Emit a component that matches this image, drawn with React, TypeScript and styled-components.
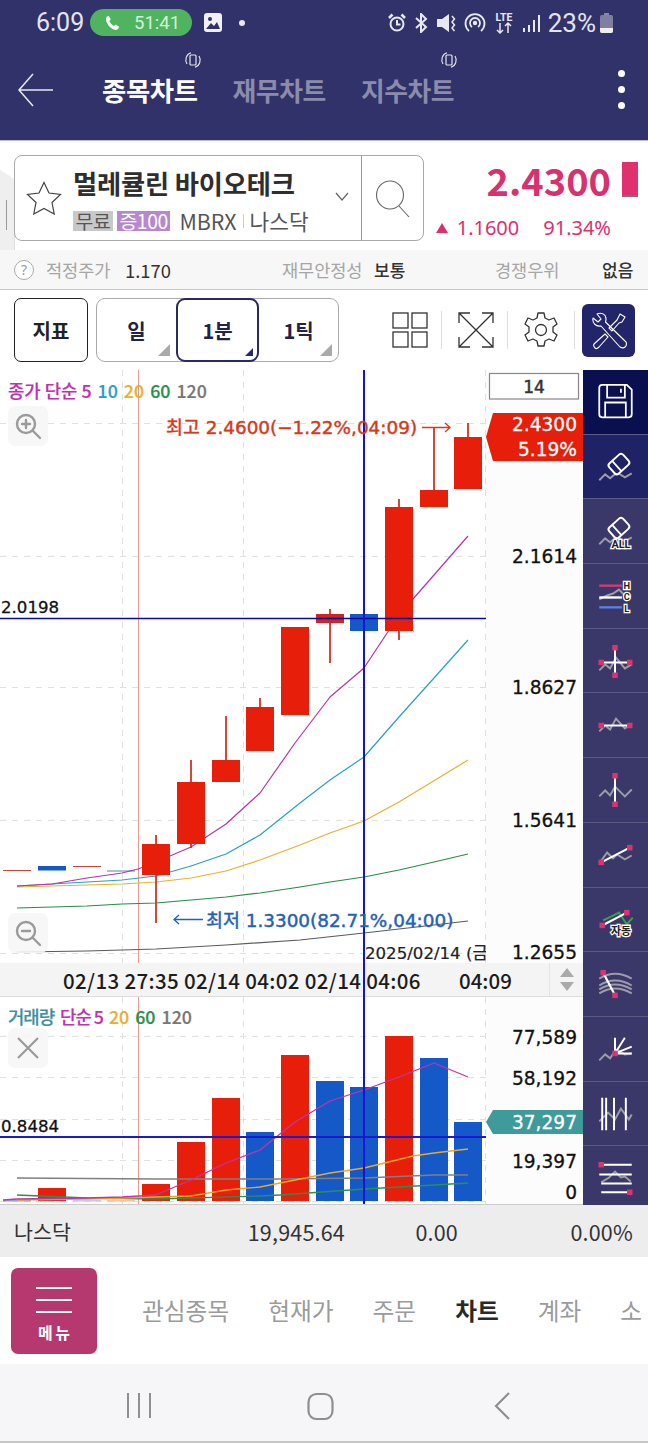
import React from "react";
import styled, { createGlobalStyle } from "styled-components";

const KR = `"Noto Sans CJK KR", "Noto Sans", sans-serif`;
const CHART = `"DejaVu Sans", "Noto Sans CJK KR", sans-serif`;

const Global = createGlobalStyle`
  html, body { margin: 0; padding: 0; background: #fff; }
  * { box-sizing: border-box; }
  body { font-family: ${KR}; }
`;

const Page = styled.div`
  width: 648px; height: 1445px; overflow: hidden; position: relative; background: #fff;
  display: flex; flex-direction: column;
`;

/* ---------- top ---------- */
const TopArea = styled.header`
  height: 140px; background: #32326a; display: flex; flex-direction: column; flex: none;
`;
const StatusBar = styled.div`
  height: 45px; display: flex; align-items: center; padding: 0 35px 0 36px; color: #e4e4ee;
  font-family: Roboto, sans-serif;
`;
const Clock = styled.span`font-size: 25px; width: 54px;`;
const CallPill = styled.div`
  width: 102px; height: 27px; border-radius: 14px; background: #4fb35f; display: flex; align-items: center;
  padding-left: 14px; gap: 13px; color: #d6f0d8; font-size: 18.5px;
`;
const StatusLeft = styled.div`display: flex; align-items: center; gap: 12px; margin-left: 12px;`;
const StatusDot = styled.i`width: 6px; height: 6px; border-radius: 50%; background: #e8e8f0; margin-left: 5px;`;
const StatusRight = styled.div`display: flex; align-items: center; margin-left: auto; gap: 8px;`;
const BatteryText = styled.span`font-size: 26px;`;

const TitleBar = styled.nav`
  flex: 1; display: flex; align-items: flex-start; padding-left: 18px; position: relative;
`;
const BackIcon = styled.svg`width: 36px; height: 34px; margin-top: 28px; flex: none;`;
const Tabs = styled.div`display: flex; margin-left: 48px; gap: 35px; margin-top: 25px;`;
const Tab = styled.div<{ $on?: boolean }>`
  position: relative; font-size: ${(p) => (p.$on ? 26.4 : 25.8)}px; font-weight: 700; line-height: 40px; letter-spacing: -.4px;
  color: ${(p) => (p.$on ? "#ffffff" : "#8b8bab")};
`;
const RotateMark = styled.svg`position: absolute; right: -4px; top: -19px; width: 18px; height: 18px;`;
const MoreDots = styled.div`
  position: absolute; right: 23px; top: 25px; display: flex; flex-direction: column; gap: 9px;
  i { width: 7px; height: 7px; border-radius: 50%; background: #fff; display: block; }
`;

/* ---------- stock ---------- */
const StockArea = styled.section`
  height: 110px; display: flex; padding: 14px 0 0 14px; position: relative; flex: none; border-top: 1px solid #b8bcd4;
`;
const SideHandle = styled.div`
  position: absolute; left: -1px; top: 28px; width: 16px; height: 87px; background: #efefef;
  border: 1px solid #ddd; border-radius: 0 6px 6px 0;
  clip-path: polygon(0 0, 100% 12%, 100% 95%, 0 100%);
  &::after { content: ""; position: absolute; left: 6px; top: 30px; width: 1px; height: 30px; background: #999; }
`;
const StockBox = styled.div`
  width: 410px; height: 86px; border: 1px solid #a8a8a8; border-radius: 8px; display: flex; background: #fff;
  position: relative;
`;
const StarCell = styled.div`width: 58px; display: flex; align-items: center; justify-content: center; flex: none;`;
const StockBody = styled.div`flex: 1; display: flex; flex-direction: column; position: relative;`;
const StockName = styled.div`font-size: 26.3px; font-weight: 700; color: #2e2e2e; line-height: 30px; margin-top: 12px; letter-spacing: -.2px;`;
const StockMeta = styled.div`display: flex; align-items: center; margin-top: 13px; font-size: 21.4px; color: #555; line-height: 20px;`;
const Chip = styled.span<{ $bg: string; $fg: string }>`
  background: ${(p) => p.$bg}; color: ${(p) => p.$fg}; height: 20px; padding: 0 2.5px; margin-right: 4px;
  font-size: 19.4px; line-height: 20px; letter-spacing: -.4px;
`;
const MbrxText = styled.span`margin-left: 5px;`;
const MetaSep = styled.i`width: 1px; height: 14px; background: #ccc; margin: 0 6px;`;
const Chevron = styled.svg`position: absolute; right: 11px; top: 35px; width: 16px; height: 12px;`;
const SearchCell = styled.div`
  width: 62px; border-left: 1px solid #999; display: flex; align-items: center; justify-content: center; flex: none; padding-top: 1px;
`;
const PriceCol = styled.div`flex: 1; display: flex; flex-direction: column; align-items: flex-end; padding-right: 37px; position: relative; color: #d9316f;`;
const Price = styled.div`font-size: 38px; font-weight: 700; line-height: 56px; margin-top: -3px;`;
const PriceBar = styled.i`position: absolute; right: 10px; top: 7px; width: 16px; height: 35px; background: #e0306f; border-bottom: 2px solid #8a6a7a;`;
const PriceDelta = styled.div`display: flex; align-items: center; font-size: 20px; line-height: 24px; margin-top: 8px; font-family: "Noto Sans", sans-serif;`;
const UpTri = styled.i`width: 0; height: 0; border: 6.5px solid transparent; border-top: 0; border-bottom: 10px solid #d9316f; margin-right: 9px;`;
const Pct = styled.span`margin-left: 24px;`;

const InfoRow = styled.div`
  height: 40px; background: #f7f7f7; border-bottom: 1px solid #c8c8c8; display: flex; align-items: center; font-size: 17.6px; position: relative; flex: none;
`;
const HelpDot = styled.span`
  width: 20px; height: 20px; margin-left: 14px; margin-right: 12px; border: 1px solid #aaa; border-radius: 50%; color: #999; font-size: 14px;
  display: flex; align-items: center; justify-content: center; background: #fff; font-family: "Noto Sans", sans-serif;
`;
const InfoLabel = styled.span<{ $w: number }>`color: #a6a6a6; width: ${(p) => p.$w}px; letter-spacing: -.1px;`;
const InfoValue = styled.span<{ $w: number; $bold?: boolean }>`
  color: #333; width: ${(p) => p.$w}px; font-weight: ${(p) => (p.$bold ? 500 : 400)};
  font-size: ${(p) => (p.$bold ? 17 : 18.4)}px;
`;

const Toolbar = styled.div`height: 80px; display: flex; align-items: center; background: #fff; padding-left: 14px; flex: none;`;
const IndicatorBtn = styled.div`
  width: 74px; height: 64px; border: 1.5px solid #222; border-radius: 7px; display: flex; align-items: center; justify-content: center;
  font-size: 20px; font-weight: 700; color: #222;
`;
const PeriodGroup = styled.div`
  margin-left: 8px; width: 243px; height: 64px; border: 1px solid #aaa; border-radius: 9px; display: flex; position: relative;
`;
const PeriodBtn = styled.div<{ $on?: boolean }>`
  flex: 1; display: flex; align-items: center; justify-content: center; position: relative;
  font-size: 20px; font-weight: 700; color: #22224a;
  ${(p) => p.$on && `border: 2px solid #2a2a62; border-radius: 9px; margin: -1px 0;`}
  &::after {
    content: ""; position: absolute; right: ${(p) => (p.$on ? 4 : 6)}px; bottom: ${(p) => (p.$on ? 4 : 5)}px; width: 0; height: 0;
    border-style: solid; border-width: 0 0 ${(p) => (p.$on ? 8 : 12)}px ${(p) => (p.$on ? 8 : 12)}px;
    border-color: transparent transparent ${(p) => (p.$on ? "#2a2a62" : "#aaa")} transparent;
  }
`;
const ToolIcon = styled.svg<{ $w: number; $ml: number }>`width: ${(p) => p.$w}px; height: 38px; margin-left: ${(p) => p.$ml}px; flex: none;`;
const Vline = styled.i<{ $ml: number }>`width: 1px; height: 38px; background: #ddd; margin-left: ${(p) => p.$ml}px; flex: none;`;
const ToolsBtn = styled.div`
  width: 53px; height: 53px; border-radius: 6px; background: #22256a; margin-left: 7px; display: flex; align-items: center; justify-content: center; flex: none;
`;

/* ---------- chart ---------- */
const ChartArea = styled.section`height: 835px; display: flex; flex: none;`;
const ChartCol = styled.div`width: 583px; display: flex; flex-direction: column; flex: none;`;
const PricePane = styled.div`height: 593px; position: relative;`;
const VolumePane = styled.div`height: 208px; position: relative; border-bottom: 1px solid #ccc;`;
const Plot = styled.svg`display: block; width: 583px; height: 100%;`;
const Legend = styled.div<{ $top: number }>`
  position: absolute; left: 8px; top: ${(p) => p.$top}px; font-size: 17.8px; font-weight: 500; line-height: 22px; display: flex; gap: 6px;
  font-family: "Noto Sans CJK KR", sans-serif; -webkit-text-stroke: .2px;
`;
const LegendItem = styled.span<{ $c: string; $tight?: boolean }>`
  color: ${(p) => p.$c};
  letter-spacing: ${(p) => (p.$tight ? "-1px" : "0")};
`;
const FloatBtn = styled.div<{ $top: number }>`
  position: absolute; left: 8px; top: ${(p) => p.$top}px; width: 40px; height: 40px; border-radius: 7px; background: rgba(246,246,246,.9);
  display: flex; align-items: center; justify-content: center;
`;
const TimeAxis = styled.div`
  height: 34px; background: #f4f4f4; border-bottom: 1px solid #ddd; position: relative; display: flex; align-items: center;
  font-size: 20.5px; font-weight: 500; color: #1c1c1c; padding-left: 63px; flex: none;
`;
const TimeLabels = styled.span`letter-spacing: .34px; white-space: pre;`;
const TimeLast = styled.span`position: absolute; left: 459px;`;
const CrossV = styled.i`position: absolute; left: 363px; top: 0; bottom: -1px; width: 2px; background: #1414d0;`;
const Stepper = styled.div`
  position: absolute; left: 549px; top: 0; bottom: 0; width: 34px; border-left: 1px solid #e4e4e4;
  display: flex; flex-direction: column; align-items: center; justify-content: center; gap: 5px;
  i { width: 0; height: 0; border-left: 7px solid transparent; border-right: 7px solid transparent; }
  i:first-child { border-bottom: 9px solid #aaa; }
  i:last-child { border-top: 9px solid #aaa; }
`;
const Rail = styled.aside`width: 65px; background: #3a3868; overflow: hidden; flex: none;`;
const RailItem = styled.div<{ $tone?: string }>`
  height: 64.7px; border-bottom: 1px solid #5b5a84; display: block;
  background: ${(p) => (p.$tone === "save" ? "#0a0f50" : p.$tone === "active" ? "#1f2366" : "#3a3868")};
  svg { display: block; width: 65px; height: 64px; }
`;

/* ---------- bottom ---------- */
const IndexRow = styled.div`
  height: 52px; background: #ededed; display: flex; align-items: center; font-size: 21.5px; color: #333; position: relative; flex: none; padding: 0 14px;
  font-family: "Noto Sans CJK KR", sans-serif; letter-spacing: .2px;
`;
const IndexName = styled.span`width: 233px; font-size: 20.6px; letter-spacing: 0;`;
const IndexNum = styled.span<{ $w: number }>`width: ${(p) => p.$w}px; text-align: right;`;
const BottomNav = styled.nav`height: 107px; background: #fff; display: flex; align-items: center; padding-left: 11px; overflow: hidden; flex: none;`;
const MenuBtn = styled.div`
  width: 86px; height: 86px; border-radius: 7px; background: #b5386e; display: flex; flex-direction: column; align-items: center; flex: none; padding-top: 19px;
  i { width: 36px; height: 2.5px; background: #fff; margin-bottom: 9.5px; display: block; }
`;
const MenuText = styled.span`color: #fff; font-weight: 700; font-size: 16px; line-height: 16px; margin-top: 1px; letter-spacing: 2.5px; margin-right: -2.5px;`;
const NavItems = styled.div`display: flex; margin-left: 45px; gap: 39px; white-space: nowrap; margin-bottom: 2px;`;
const NavItem = styled.span<{ $on?: boolean }>`
  font-size: 23.7px; color: ${(p) => (p.$on ? "#2a2a2a" : "#9b9b9b")}; font-weight: ${(p) => (p.$on ? 700 : 400)};
`;
const SysNav = styled.div`height: 79px; background: #f6f6f8; border-bottom: 2px solid #c6c6c8; flex: none; position: relative;`;
const SysIcons = styled.svg`display: block; width: 648px; height: 77px;`;

/* ---------- chart data ---------- */
const RED = "#e61e0a";
const BLUE = "#1559c8";
type Candle = { x: number; t: number; b: number; wt: number; wb: number; c: string; vt: number; vc: string };
const candles: Candle[] = [
  { x: 142, t: 844, b: 875, wt: 835, wb: 923, c: RED, vt: 1184, vc: RED },
  { x: 177, t: 782, b: 844, wt: 760, wb: 848, c: RED, vt: 1142, vc: RED },
  { x: 212, t: 760, b: 782, wt: 716, wb: 782, c: RED, vt: 1098, vc: RED },
  { x: 246, t: 707, b: 751, wt: 698, wb: 751, c: RED, vt: 1132, vc: BLUE },
  { x: 281, t: 627, b: 715, wt: 627, wb: 715, c: RED, vt: 1055, vc: RED },
  { x: 316, t: 614, b: 623, wt: 609, wb: 663, c: "#d0241c", vt: 1081, vc: BLUE },
  { x: 350, t: 614, b: 631, wt: 614, wb: 631, c: BLUE, vt: 1087, vc: BLUE },
  { x: 385, t: 507, b: 631, wt: 499, wb: 640, c: RED, vt: 1036, vc: RED },
  { x: 420, t: 490, b: 507, wt: 427, wb: 490, c: RED, vt: 1058, vc: BLUE },
  { x: 454, t: 437, b: 489, wt: 423, wb: 489, c: RED, vt: 1122, vc: BLUE },
];
const pts = (a: number[][]) => a.map((p) => p.join(",")).join(" ");
const MA5 = [[17,886],[52,884],[87,878],[122,873],[138,869],[156,862],[191,847],[226,824],[260,793],[295,743],[330,697],[364,668],[399,615],[434,575],[468,536]];
const MA10 = [[17,886],[52,884],[87,882],[122,880],[156,876],[191,866],[226,854],[260,835],[300,803],[330,780],[364,757],[399,717],[434,678],[468,640]];
const MA20 = [[17,887],[52,886],[87,885],[122,884],[156,882],[191,878],[226,871],[260,860],[300,845],[330,833],[364,821],[399,802],[427,785],[468,760]];
const MA60 = [[17,908],[87,906],[122,904],[156,903],[226,897],[260,893],[300,887],[330,882],[364,877],[399,870],[434,862],[468,854]];
const MA120 = [[17,952],[87,951],[122,950],[156,949],[226,945],[300,940],[364,933],[434,925],[468,921]];
const V5 = [[3,1200],[17,1199],[87,1198],[122,1197],[156,1195],[191,1180],[226,1163],[260,1150],[295,1122],[330,1101],[364,1090],[399,1077],[434,1063],[468,1077]];
const V20 = [[17,1200],[87,1199],[122,1198],[156,1197],[191,1196],[226,1190],[260,1187],[280,1183],[330,1173],[364,1168],[413,1156],[434,1153],[468,1149]];
const V60 = [[17,1195],[87,1198],[156,1199],[260,1196],[280,1195],[364,1189],[434,1185],[468,1183]];
const V120 = [[17,1178],[156,1179],[280,1179],[364,1178],[434,1175],[468,1175]];

const Line = ({ p, c, w = 1.2 }: { p: number[][]; c: string; w?: number }) => (
  <polyline points={pts(p)} fill="none" stroke={c} strokeWidth={w} strokeLinejoin="round" />
);
const Grid = ({ ys, y1, y2 }: { ys: number[]; y1: number; y2: number }) => (
  <g stroke="#e0e0e0" strokeWidth="1" strokeDasharray="6 6">
    {ys.map((y) => <line key={y} x1="0" x2="486" y1={y + 0.5} y2={y + 0.5} />)}
    {[122, 243, 485].map((x) => <line key={x} x1={x + 0.5} x2={x + 0.5} y1={y1} y2={y2} />)}
  </g>
);
const AxisText = ({ y, children, fill = "#111", size = 18.6, right = 577 }: { y: number; children: React.ReactNode; fill?: string; size?: number; right?: number }) => (
  <text x={right} y={y} textAnchor="end" fontFamily={CHART} fontSize={size} fill={fill} stroke={fill} strokeWidth=".3">{children}</text>
);

/* ---------- small icons ---------- */
const W = "#e8e8f0";
const Rotate = () => (
  <RotateMark viewBox="0 0 18 18" fill="none" stroke="#e4e4ee" strokeWidth="1.200">
    <rect x="6" y="4" width="6" height="10" rx="1" />
    <path d="M3 13A7.5 7.5 0 0 1 7 1.8M15 5a7.5 7.5 0 0 1-4 11.2" />
  </RotateMark>
);
const Magnifier = ({ sign }: { sign: "+" | "-" }) => (
  <svg width="28" height="28" viewBox="0 0 28 28" fill="none" stroke="#9a9a9a" strokeWidth="2.4">
    <circle cx="12" cy="12" r="9" />
    <path d="M19 19l7 7M8 12h8" strokeLinecap="round" />
    {sign === "+" && <path d="M12 8v8" strokeLinecap="round" />}
  </svg>
);

const Z = "#9c9ca8";
const Zig = ({ c = Z, p = "16,46 22,40 27,44 33,39 38,33 44,41 49,36" }: { c?: string; p?: string }) => (
  <polyline points={p} fill="none" stroke={c} strokeWidth="2" />
);
const Sq = ({ x, y, s = 5 }: { x: number; y: number; s?: number }) => <rect x={x - s / 2 - .3} y={y - s / 2 - .3} width={s + .6} height={s + .6} fill="#d93374" />;
const Wl = ({ d, w = 2 }: { d: string; w?: number }) => <path d={d} stroke="#fff" strokeWidth={w} fill="none" />;
const Outline = ({ x, y, s, children, font = `"Noto Sans CJK KR", sans-serif` }: { x: number; y: number; s: number; children: React.ReactNode; font?: string }) => (
  <text x={x} y={y} fontSize={s} fontWeight="700" fontFamily={font} textAnchor="middle" fill="#222" stroke="#fff" strokeWidth="2.6" paintOrder="stroke">{children}</text>
);
const Eraser = ({ bg }: { bg: string }) => (
  <g transform="rotate(-42 36 29.500)">
    <rect x="26.500" y="22.500" width="19" height="14" rx="3" fill={bg} stroke="#fff" strokeWidth="2" />
    <path d="M33 22.500v14" stroke="#fff" strokeWidth="1.800" />
  </g>
);

const railIcons: React.ReactNode[] = [
  <svg viewBox="0 0 65 65" key="save" fill="none" stroke="#fff" strokeWidth="1.8">
    <path d="M19 15h25l5 5v25a3 3 0 0 1-3 3H19a3 3 0 0 1-3-3V18a3 3 0 0 1 3-3z" />
    <path d="M24 15v13h18V15M38 19v4" />
    <path d="M22 48V33h21v15" />
  </svg>,
  <svg viewBox="0 0 65 65" key="er"><Zig p="16,46 22,40 27,44 34,38 42,43 49,39" /><Eraser bg="#1f2366" /></svg>,
  <svg viewBox="0 0 65 65" key="all"><Zig p="16,46 22,40 27,44 34,38 42,43 49,39" /><Eraser bg="#3a3868" /><Outline x={38} y={50} s={11} font="Roboto, sans-serif">ALL</Outline></svg>,
  <svg viewBox="0 0 65 65" key="hcl">
    <Zig p="16,36 24,32 30,30 36,26 42,32" />
    <path d="M16 22h23" stroke="#d33a78" strokeWidth="2.4" />
    <path d="M16 34h23" stroke="#fff" strokeWidth="2.4" />
    <path d="M16 44h23" stroke="#5a80e0" strokeWidth="2.4" />
    <Outline x={44} y={25.500} s={9.400} font="Roboto, sans-serif">H</Outline>
    <Outline x={44} y={37} s={9.400} font="Roboto, sans-serif">C</Outline>
    <Outline x={44} y={48.500} s={9.400} font="Roboto, sans-serif">L</Outline>
  </svg>,
  <svg viewBox="0 0 65 65" key="cross">
    <Zig p="16,42 22,36 27,40 33,29 42,40 49,36" /><Wl d="M18 34h29M32 19v28" />
    <Sq x={32} y={19} /><Sq x={18} y={34} /><Sq x={47} y={34} /><Sq x={32} y={47} />
  </svg>,
  <svg viewBox="0 0 65 65" key="hline">
    <Zig p="16,39 22,33 27,37 33,26 42,36 49,31" /><Wl d="M18 33h29" /><Sq x={18} y={33} /><Sq x={47} y={33} />
  </svg>,
  <svg viewBox="0 0 65 65" key="vline">
    <Zig p="16,39 22,33 27,38 32,29 42,39 49,32" /><Wl d="M32 18v29" /><Sq x={32} y={18} /><Sq x={32} y={47} />
  </svg>,
  <svg viewBox="0 0 65 65" key="trend">
    <Zig p="16,41 24,30 30,36 34,32 42,37 49,33" /><Wl d="M18 40L47 25" w={2.2} /><Sq x={18} y={40} /><Sq x={47} y={25} />
  </svg>,
  <svg viewBox="0 0 65 65" key="auto">
    <Zig c="#3aa04a" p="20,33 30,28 36,25 42,34 44,37 50,30" /><Wl d="M19 38L44 25" w={2.2} /><Sq x={19} y={38} /><Sq x={44} y={25} />
    <Outline x={38} y={48} s={11}>자동</Outline>
  </svg>,
  <svg viewBox="0 0 65 65" key="arc" fill="none">
    <path d="M16 27Q32 17 49 27M16 34Q32 24 49 34M16 38Q32 28 49 38M16 42Q32 32 49 42" stroke={Z} strokeWidth="2" />
    <Wl d="M20 21L32 44" w={2.2} /><Sq x={20} y={21} /><Sq x={32} y={44} />
  </svg>,
  <svg viewBox="0 0 65 65" key="fan">
    <Zig p="16,44 22,38 27,42 33,33 42,38 49,37" />
    <Wl d="M32 37V21M32 37L42 21M32 37L49 30M32 37H49" /><Sq x={32} y={37} />
  </svg>,
  <svg viewBox="0 0 65 65" key="vs">
    <Zig p="16,40 25,31 32,38 38,27 46,38 49,33" /><Wl d="M19 16v33M23 16v33M31 16v33M43 16v33" />
  </svg>,
  <svg viewBox="0 0 65 65" key="fib">
    <Zig p="18,37 26,32 32,26 38,32 42,31 48,36" /><Wl d="M18 19h31M16 29h33M18 38h31M18 47h29" /><Sq x={18} y={19} /><Sq x={47} y={47} />
  </svg>,
];

export default function App() {
  return (
    <Page>
      <Global />
      <TopArea>
        <StatusBar>
          <Clock>6:09</Clock>
          <CallPill>
            <svg width="17" height="17" viewBox="0 0 24 24" fill="#f0fff0"><path d="M6.6 2.5l3 5-2 2.4c1 2.6 3.6 5.6 6.4 7l2.4-2 5 3.2c-.5 2.5-2.4 4.4-4.8 4.4C9.2 22.500 2 12 2.800 6.500 3.100 4.500 4.500 3 6.600 2.500z" /></svg>
            <span>51:41</span>
          </CallPill>
          <StatusLeft>
            <svg width="18" height="19" viewBox="0 0 18 19"><rect width="18" height="19" rx="3" fill="#f0f0f6" /><circle cx="6" cy="6" r="2" fill="#32326a" /><path d="M2 16l5-6 3 3 3-4 3 7z" fill="#32326a" /></svg>
            <StatusDot />
          </StatusLeft>
          <StatusRight>
            <svg width="18" height="20" viewBox="0 0 18 20" fill="none" stroke={W} strokeWidth="2"><circle cx="9" cy="11" r="6.500" /><path d="M9 7v4.500h3.500" /><path d="M1 5l3.500-3.500M17 5l-3.500-3.500" strokeWidth="2.600" /></svg>
            <svg width="14" height="20" viewBox="0 0 14 20" fill="none" stroke={W} strokeWidth="2"><path d="M2 5l10 9-5 5V1l5 5L2 15" /></svg>
            <svg width="20" height="20" viewBox="0 0 20 20" fill={W}><path d="M1 6h5l7-5v18l-7-5H1z" /><path d="M16 3l2.500 3-2.500 3 2.500 3-2.500 3 2.500 3" fill="none" stroke={W} strokeWidth="1.500" /></svg>
            <svg width="22" height="20" viewBox="0 0 22 20" fill="none" stroke={W} strokeWidth="1.800"><path d="M5 18a9.500 9.500 0 1 1 12 0" /><path d="M8 14a5 5 0 1 1 6 0" /><circle cx="11" cy="10" r="1.300" fill={W} /></svg>
            <svg width="21" height="24" viewBox="0 0 21 24"><text x="10" y="9.500" fontSize="10.500" fontWeight="700" fontFamily="Roboto, sans-serif" textAnchor="middle" fill={W}>LTE</text><path d="M6 12v10M3 19l3 3 3-3M14 22V12M11 15l3-3 3 3" fill="none" stroke={W} strokeWidth="1.500" /></svg>
            <svg width="17" height="20" viewBox="0 0 17 20" fill={W}><rect x="0" y="15" width="2" height="4" /><rect x="5" y="12" width="2" height="7" /><rect x="10" y="7" width="2" height="12" /><rect x="15" y="2" width="2" height="17" /></svg>
            <BatteryText>23%</BatteryText>
            <svg width="13" height="20" viewBox="0 0 13 20" style={{ marginLeft: -4 }}><rect x="4" y="0" width="5" height="2" fill="#8888a8" /><rect x="0" y="2" width="13" height="18" rx="2" fill="#7f7fa0" /><path d="M0 15h13v3a2 2 0 0 1-2 2H2a2 2 0 0 1-2-2z" fill="#eee" /></svg>
          </StatusRight>
        </StatusBar>
        <TitleBar>
          <BackIcon viewBox="0 0 36 34" fill="none" stroke="#e8e8f0" strokeWidth="1.500"><path d="M35 17H1M15 1L1 17l14 16" /></BackIcon>
          <Tabs>
            <Tab $on>종목차트<Rotate /></Tab>
            <Tab>재무차트</Tab>
            <Tab>지수차트<Rotate /></Tab>
          </Tabs>
          <MoreDots><i /><i /><i /></MoreDots>
        </TitleBar>
      </TopArea>

      <StockArea>
        <SideHandle />
        <StockBox>
          <StarCell>
            <svg width="36" height="34" viewBox="0 0 36 34" fill="none" stroke="#444" strokeWidth="1.200"><path d="M18 1.500l5 10.500 11.500 1.500-8.500 8 2.200 11.500L18 27.500 7.800 33 10 21.500l-8.500-8L13 12z" /></svg>
          </StarCell>
          <StockBody>
            <StockName>멀레큘린 바이오테크</StockName>
            <StockMeta>
              <Chip $bg="#c8c8c8" $fg="#555">무료</Chip>
              <Chip $bg="#b888cc" $fg="#fff">증100</Chip>
              <MbrxText>MBRX</MbrxText><MetaSep />나스닥
            </StockMeta>
            <Chevron viewBox="0 0 16 12" fill="none" stroke="#666" strokeWidth="1.200"><path d="M2 2l6 7 6-7" /></Chevron>
          </StockBody>
          <SearchCell>
            <svg width="36" height="42" viewBox="0 0 36 42" fill="none" stroke="#666" strokeWidth="1.100"><ellipse cx="15" cy="17" rx="13.500" ry="14" /><path d="M24 28l10 11" /></svg>
          </SearchCell>
        </StockBox>
        <PriceCol>
          <Price>2.4300</Price>
          <PriceBar />
          <PriceDelta><UpTri />1.1600<Pct>91.34%</Pct></PriceDelta>
        </PriceCol>
      </StockArea>

      <InfoRow>
        <HelpDot>?</HelpDot>
        <InfoLabel $w={79}>적정주가</InfoLabel>
        <InfoValue $w={157}>1.170</InfoValue>
        <InfoLabel $w={92}>재무안정성</InfoLabel>
        <InfoValue $w={121} $bold>보통</InfoValue>
        <InfoLabel $w={107}>경쟁우위</InfoLabel>
        <InfoValue $w={34} $bold>없음</InfoValue>
      </InfoRow>

      <Toolbar>
        <IndicatorBtn>지표</IndicatorBtn>
        <PeriodGroup>
          <PeriodBtn>일</PeriodBtn>
          <PeriodBtn $on>1분</PeriodBtn>
          <PeriodBtn>1틱</PeriodBtn>
        </PeriodGroup>
        <ToolIcon $w={36} $ml={53} viewBox="0 0 36 38" fill="none" stroke="#333" strokeWidth="1.300">
          <rect x="1" y="2" width="15" height="15" /><rect x="20" y="2" width="15" height="15" /><rect x="1" y="21" width="15" height="15" /><rect x="20" y="21" width="15" height="15" />
        </ToolIcon>
        <Vline $ml={13} />
        <ToolIcon $w={38} $ml={15} viewBox="0 0 38 38" fill="none" stroke="#333" strokeWidth="1.300">
          <path d="M2 2l34 34M36 2L2 36M2 12V2h11M36 12V2H25M2 26v10h11M36 26v10H25" />
        </ToolIcon>
        <Vline $ml={12} />
        <ToolIcon $w={36} $ml={15} viewBox="0 0 36 38" fill="none" stroke="#333" strokeWidth="1.300">
          <path d="M15 2h6l1 5 4 2 5-2 3 6-4 3v5l4 3-3 6-5-2-4 2-1 5h-6l-1-5-4-2-5 2-3-6 4-3v-5L2 13l3-6 5 2 4-2z" strokeLinejoin="round" />
          <circle cx="18" cy="19" r="5.500" />
        </ToolIcon>
        <Vline $ml={15} />
        <ToolsBtn>
          <svg width="38" height="40" viewBox="0 0 38 40" fill="none" stroke="#fff" strokeWidth="1.100" strokeLinejoin="round">
            <path d="M3 8l5 4 3-3-4-5c4-2 9 0 9 5 0 1 0 2-.5 3L36 32c1 2 0 4-1 5s-3 1-5 0L11 16c-5 1-9-3-8-8z" />
            <path d="M30 4l5 3-3 5-3 1-7 8-3-3 8-8zM15 24L4 34c-1 2 0 3 1 4s2 1 4-1l9-10z" />
          </svg>
        </ToolsBtn>
      </Toolbar>

      <ChartArea>
        <ChartCol>
          <PricePane>
            <Plot viewBox="0 370 583 593">
              <rect x="486" y="370" width="97" height="593" fill="#fcfcfc" />
              <Grid ys={[423, 556, 687, 820, 953]} y1={370} y2={963} />
              <line x1="138.500" x2="138.500" y1="370" y2="963" stroke="#e89a92" strokeWidth="1" />
              <path d="M3 870.500h28M73 866.500h28" stroke="#c8483c" strokeWidth="1.200" />
              <path d="M107 871h28" stroke="#4a8aa8" strokeWidth="1" />
              <rect x="38" y="866" width="28" height="4.500" fill={BLUE} />
              <Line p={MA120} c="#5a5a5a" /><Line p={MA60} c="#2a8a4a" /><Line p={MA20} c="#e8b030" /><Line p={MA10} c="#2aa0c0" /><Line p={MA5} c="#b832a8" />
              {candles.map((k) => (
                <g key={k.x}>
                  <line x1={k.x + 14} x2={k.x + 14} y1={k.wt} y2={k.wb} stroke={k.c === BLUE ? BLUE : "#cf3526"} strokeWidth="1.800" />
                  <rect x={k.x} y={k.t} width="28" height={k.b - k.t} fill={k.c} />
                </g>
              ))}
              <line x1="0" x2="486" y1="618.500" y2="618.500" stroke="#0a0aa0" strokeWidth="1.500" />
              <line x1="364" x2="364" y1="370" y2="963" stroke="#1414d0" strokeWidth="2" />

              <text x="166" y="434" fontFamily={CHART} fontSize="18.400" fill="#d43a20" stroke="#d43a20" strokeWidth=".45">최고 2.4600(−1.22%,04:09)</text>
              <path d="M422 427.500h27M445 423l5 4.500-5 4.500" fill="none" stroke="#d43a20" strokeWidth="1.300" />
              <text x="206" y="927" fontFamily={CHART} fontSize="18.400" fill="#2261b8" stroke="#2261b8" strokeWidth=".45">최저 1.3300(82.71%,04:00)</text>
              <path d="M203 919.500h-29M179 915l-5 4.500 5 4.500" fill="none" stroke="#2261b8" strokeWidth="1.300" />
              <text x="1" y="613" fontFamily={CHART} fontSize="16.600" fill="#111" stroke="#111" strokeWidth=".3">2.0198</text>
              <text x="365" y="959" fontFamily={CHART} fontSize="16.600" fill="#222" stroke="#222" strokeWidth=".2">2025/02/14 (금</text>

              <rect x="486" y="940" width="97" height="23" fill="#fcfcfc" />
              <rect x="489.500" y="373.500" width="89" height="25.500" fill="#fff" stroke="#888" strokeWidth="1.200" />
              <text x="534" y="393" textAnchor="middle" fontFamily={CHART} fontSize="17" fill="#333" stroke="#333" strokeWidth=".5">14</text>
              <polygon points="486,437 493,413 583,413 583,461 493,461" fill="#e61e0a" />
              <AxisText y={431} fill="#fff">2.4300</AxisText>
              <AxisText y={456} fill="#fff">5.19%</AxisText>
              <AxisText y={563}>2.1614</AxisText>
              <AxisText y={694}>1.8627</AxisText>
              <AxisText y={827}>1.5641</AxisText>
              <AxisText y={959}>1.2655</AxisText>
            </Plot>
            <Legend $top={9}>
              <LegendItem $c="#c030b0">종가 단순 5</LegendItem>
              <LegendItem $c="#2a9fc0">10</LegendItem>
              <LegendItem $c="#e8b030">20</LegendItem>
              <LegendItem $c="#2a9050">60</LegendItem>
              <LegendItem $c="#777">120</LegendItem>
            </Legend>
            <FloatBtn $top={36}><Magnifier sign="+" /></FloatBtn>
            <FloatBtn $top={543}><Magnifier sign="-" /></FloatBtn>
          </PricePane>

          <TimeAxis>
            <TimeLabels>02/13 27:35 02/14 04:02 02/14 04:06</TimeLabels>
            <TimeLast>04:09</TimeLast>
            <CrossV />
            <Stepper><i /><i /></Stepper>
          </TimeAxis>

          <VolumePane>
            <Plot viewBox="0 997 583 207">
              <rect x="486" y="997" width="97" height="207" fill="#fcfcfc" />
              <Grid ys={[1036, 1077, 1119, 1160, 1201]} y1={997} y2={1204} />
              <line x1="138.500" x2="138.500" y1="997" y2="1204" stroke="#e89a92" strokeWidth="1" />
              <rect x="3" y="1200" width="28" height="1.500" fill="#8aa8e0" />
              <rect x="38" y="1188" width="28" height="13" fill={RED} />
              <rect x="73" y="1200" width="28" height="1.500" fill="#b8d0f0" />
              <rect x="107" y="1200" width="28" height="1.500" fill="#f4c0b0" />
              {candles.map((k) => <rect key={k.x} x={k.x} y={k.vt} width="28" height={1201 - k.vt} fill={k.vc} />)}
              <Line p={V120} c="#808080" w={1.500} /><Line p={V60} c="#2a9050" w={1.300} /><Line p={V20} c="#f0a820" w={1.300} /><Line p={V5} c="#c830a8" w={1.300} />
              <line x1="0" x2="486" y1="1137" y2="1137" stroke="#1a1ad0" strokeWidth="2.200" />
              <line x1="364" x2="364" y1="997" y2="1204" stroke="#1414d0" strokeWidth="2" />
              <text x="1" y="1132" fontFamily={CHART} fontSize="16.600" fill="#111" stroke="#111" strokeWidth=".3">0.8484</text>
              <polygon points="486,1122 493,1110 583,1110 583,1134 493,1134" fill="#3f9a9a" />
              <AxisText y={1129} fill="#fff">37,297</AxisText>
              <AxisText y={1044}>77,589</AxisText>
              <AxisText y={1085}>58,192</AxisText>
              <AxisText y={1168}>19,397</AxisText>
              <AxisText y={1199}>0</AxisText>
            </Plot>
            <Legend $top={8}>
              <LegendItem $c="#3f8f9f" $tight>거래량</LegendItem>
              <LegendItem $c="#c030b0" $tight>단순 5</LegendItem>
              <LegendItem $c="#e8b030">20</LegendItem>
              <LegendItem $c="#2a9050">60</LegendItem>
              <LegendItem $c="#777">120</LegendItem>
            </Legend>
            <FloatBtn $top={31}>
              <svg width="24" height="24" viewBox="0 0 24 24" stroke="#9a9a9a" strokeWidth="2.200"><path d="M2 2l20 20M22 2L2 22" /></svg>
            </FloatBtn>
          </VolumePane>
        </ChartCol>
        <Rail>
          {railIcons.map((ic, i) => (
            <RailItem key={i} $tone={i === 0 ? "save" : i === 1 ? "active" : undefined}>{ic}</RailItem>
          ))}
        </Rail>
      </ChartArea>

      <IndexRow>
        <IndexName>나스닥</IndexName>
        <IndexNum $w={98}>19,945.64</IndexNum>
        <IndexNum $w={113}>0.00</IndexNum>
        <IndexNum $w={175}>0.00%</IndexNum>
      </IndexRow>

      <BottomNav>
        <MenuBtn>
          <i /><i /><i />
          <MenuText>메뉴</MenuText>
        </MenuBtn>
        <NavItems>
          <NavItem>관심종목</NavItem>
          <NavItem>현재가</NavItem>
          <NavItem>주문</NavItem>
          <NavItem $on>차트</NavItem>
          <NavItem>계좌</NavItem>
          <NavItem>소</NavItem>
        </NavItems>
      </BottomNav>

      <SysNav>
        <SysIcons viewBox="0 1364 648 77" fill="none" stroke="#8f8f8f">
          <path d="M128 1393v25M139 1393v25M150 1393v25" strokeWidth="2" />
          <rect x="308.500" y="1394" width="24" height="25" rx="8" strokeWidth="2.200" />
          <path d="M509 1393l-13 13 13 13" strokeWidth="2.200" />
        </SysIcons>
      </SysNav>
    </Page>
  );
}
